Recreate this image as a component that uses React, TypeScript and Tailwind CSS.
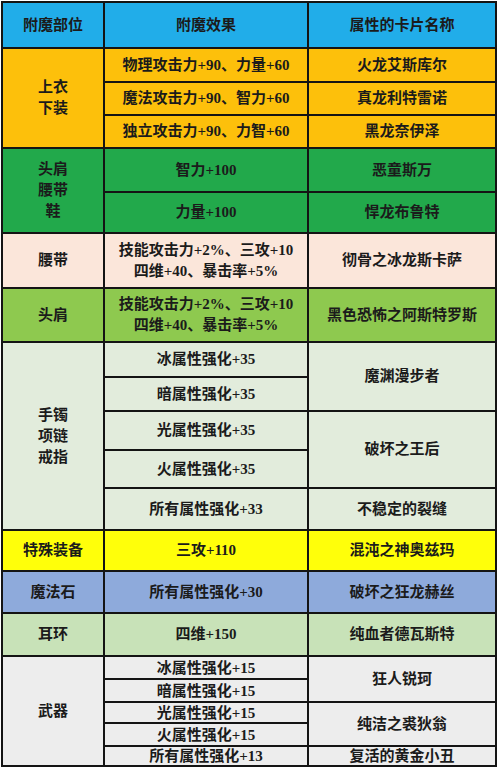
type Cell = { text: string[]; bg: string; span?: number };

// row heights in px, between 2px grid lines
const heights = [44, 32, 31, 31, 42, 39, 53, 52, 33, 32, 37, 36, 40, 39, 40, 41, 21, 21, 19, 21, 18];

const C = {
  blue: 'bg-[#21ade9]',
  orange: 'bg-[#fdc00b]',
  green: 'bg-[#22a94b]',
  pink: 'bg-[#fbe6da]',
  lime: 'bg-[#8ec94f]',
  mint: 'bg-[#e2ecdc]',
  yellow: 'bg-[#ffff0a]',
  violet: 'bg-[#8eaadb]',
  pale: 'bg-[#c8e2b8]',
  gray: 'bg-[#ededed]',
};

function Box({ text, bg, span, tight }: Cell & { tight?: boolean }) {
  const spanCls =
    span === 5 ? 'row-span-5' : span === 3 ? 'row-span-3' : span === 2 ? 'row-span-2' : 'row-span-1';
  return (
    <div
      className={`${bg} ${spanCls} flex flex-col items-center justify-center text-center whitespace-nowrap ${
        tight ? 'leading-[18px]' : 'leading-[21px]'
      }`}
    >
      {text.map((t) => (
        <span key={t}>{t}</span>
      ))}
    </div>
  );
}

export default function App() {
  return (
    <div className="w-[499px] h-[768px] overflow-hidden bg-white">
      <div
        className="ml-px mt-px w-[496px] grid grid-cols-[100px_202px_186px] gap-[2px] p-[2px] bg-[#141414] text-[15px] font-bold text-[#1b1b1b]"
        style={{
          gridTemplateRows: heights.map((h) => `${h}px`).join(' '),
          fontFamily: '"Liberation Serif", "Noto Sans CJK SC", sans-serif',
        }}
      >
        {/* header */}
        <Box text={['附魔部位']} bg={C.blue} />
        <Box text={['附魔效果']} bg={C.blue} />
        <Box text={['属性的卡片名称']} bg={C.blue} />

        {/* 上衣 下装 */}
        <Box text={['上衣', '下装']} bg={C.orange} span={3} />
        <Box text={['物理攻击力+90、力量+60']} bg={C.orange} />
        <Box text={['火龙艾斯库尔']} bg={C.orange} />
        <Box text={['魔法攻击力+90、智力+60']} bg={C.orange} />
        <Box text={['真龙利特雷诺']} bg={C.orange} />
        <Box text={['独立攻击力+90、力智+60']} bg={C.orange} />
        <Box text={['黑龙奈伊泽']} bg={C.orange} />

        {/* 头肩 腰带 鞋 */}
        <Box text={['头肩', '腰带', '鞋']} bg={C.green} span={2} />
        <Box text={['智力+100']} bg={C.green} />
        <Box text={['恶童斯万']} bg={C.green} />
        <Box text={['力量+100']} bg={C.green} />
        <Box text={['悍龙布鲁特']} bg={C.green} />

        {/* 腰带 */}
        <Box text={['腰带']} bg={C.pink} />
        <Box text={['技能攻击力+2%、三攻+10', '四维+40、暴击率+5%']} bg={C.pink} />
        <Box text={['彻骨之冰龙斯卡萨']} bg={C.pink} />

        {/* 头肩 */}
        <Box text={['头肩']} bg={C.lime} />
        <Box text={['技能攻击力+2%、三攻+10', '四维+40、暴击率+5%']} bg={C.lime} />
        <Box text={['黑色恐怖之阿斯特罗斯']} bg={C.lime} />

        {/* 手镯 项链 戒指 */}
        <Box text={['手镯', '项链', '戒指']} bg={C.mint} span={5} />
        <Box text={['冰属性强化+35']} bg={C.mint} />
        <Box text={['魔渊漫步者']} bg={C.mint} span={2} />
        <Box text={['暗属性强化+35']} bg={C.mint} />
        <Box text={['光属性强化+35']} bg={C.mint} />
        <Box text={['破坏之王后']} bg={C.mint} span={2} />
        <Box text={['火属性强化+35']} bg={C.mint} />
        <Box text={['所有属性强化+33']} bg={C.mint} />
        <Box text={['不稳定的裂缝']} bg={C.mint} />

        {/* 特殊装备 */}
        <Box text={['特殊装备']} bg={C.yellow} />
        <Box text={['三攻+110']} bg={C.yellow} />
        <Box text={['混沌之神奥兹玛']} bg={C.yellow} />

        {/* 魔法石 */}
        <Box text={['魔法石']} bg={C.violet} />
        <Box text={['所有属性强化+30']} bg={C.violet} />
        <Box text={['破坏之狂龙赫丝']} bg={C.violet} />

        {/* 耳环 */}
        <Box text={['耳环']} bg={C.pale} />
        <Box text={['四维+150']} bg={C.pale} />
        <Box text={['纯血者德瓦斯特']} bg={C.pale} />

        {/* 武器 */}
        <Box text={['武器']} bg={C.gray} span={5} />
        <Box text={['冰属性强化+15']} bg={C.gray} tight />
        <Box text={['狂人锐珂']} bg={C.gray} span={2} />
        <Box text={['暗属性强化+15']} bg={C.gray} tight />
        <Box text={['光属性强化+15']} bg={C.gray} tight />
        <Box text={['纯洁之裘狄翁']} bg={C.gray} span={2} />
        <Box text={['火属性强化+15']} bg={C.gray} tight />
        <Box text={['所有属性强化+13']} bg={C.gray} tight />
        <Box text={['复活的黄金小丑']} bg={C.gray} tight />
      </div>
    </div>
  );
}
